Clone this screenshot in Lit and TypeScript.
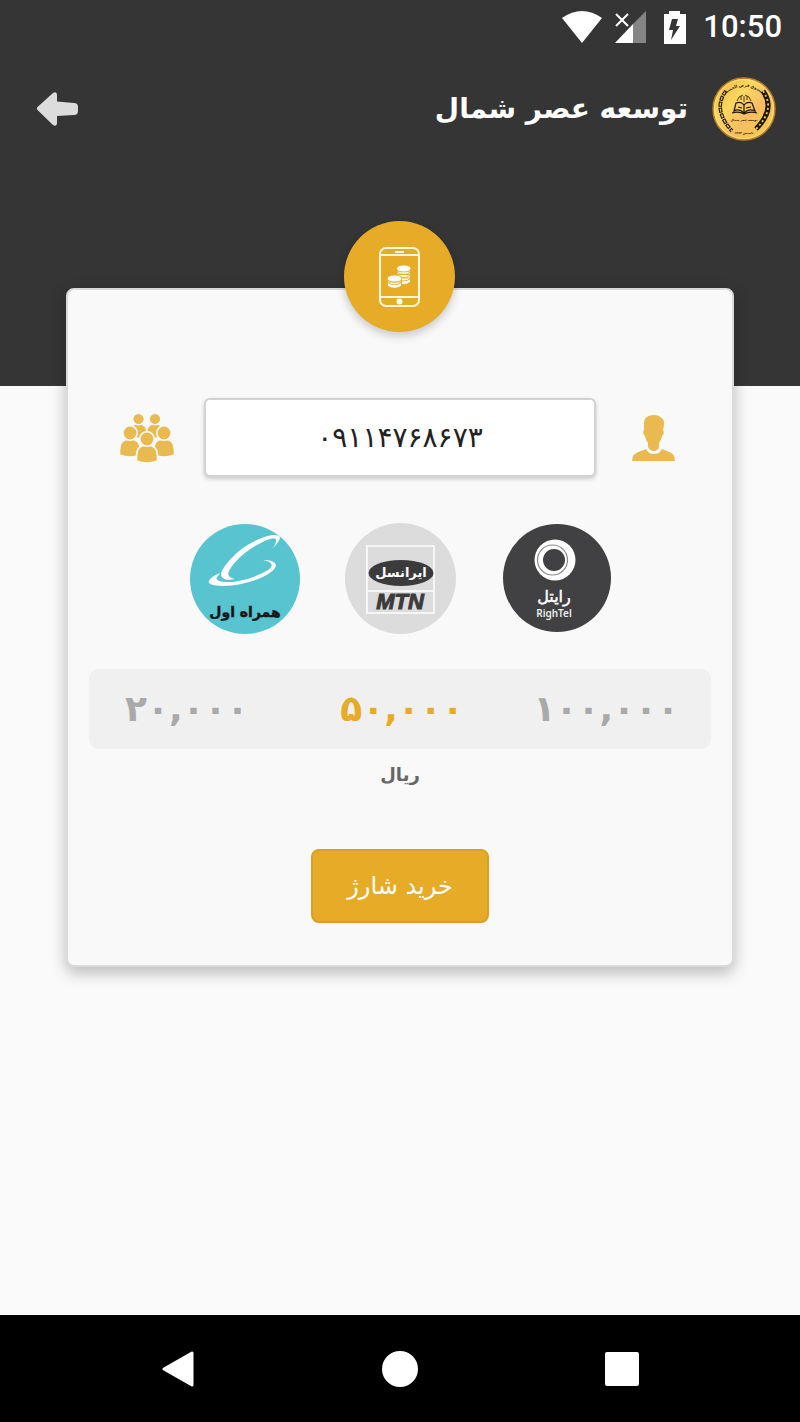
import { LitElement, html, svg, css } from "lit";
import { customElement, state } from "lit/decorators.js";

const operators = [
  {
    id: "rightel",
    name: "رایتل",
    art: svg`
      <circle cx="56" cy="55" r="54" fill="#414042"/>
      <circle cx="54" cy="37" r="20.500" fill="#fff"/>
      <circle cx="51.500" cy="37" r="15" fill="none" stroke="#8a8a8a" stroke-width="1.2"/>
      <circle cx="53" cy="37" r="11" fill="#414042"/>
      <text class="logo-fa" x="53" y="79" font-size="16" text-anchor="middle" fill="#fff" stroke="#fff" stroke-width=".5">رایتل</text>
      <text class="logo-latin" x="53" y="94" font-size="10" font-weight="600" text-anchor="middle" fill="#eee">RighTel</text>`,
  },
  {
    id: "mtn",
    name: "ایرانسل",
    art: svg`
      <circle cx="55.500" cy="55.500" r="55.500" fill="#dcdcdc"/>
      <path d="M22 23H89V90H22ZM22 68H89" fill="none" stroke="#f6f6f6" stroke-width="2"/>
      <ellipse cx="56" cy="50" rx="32.5" ry="13" fill="#3b3b3c"/>
      <text class="logo-fa" x="56" y="54" font-size="13" font-weight="bold" text-anchor="middle" fill="#fff">ایرانسل</text>
      <text class="logo-mtn" x="55" y="86" font-size="22" text-anchor="middle" fill="#3b3b3c" stroke="#3b3b3c">MTN</text>`,
  },
  {
    id: "mci",
    name: "همراه اول",
    art: svg`
      <circle cx="56" cy="56" r="55" fill="#57c4d0"/>
      <path d="M90 13C84 10 72 14 57 23C43 32 32 47 32 51C32 56 38 58 46 56C40 55 38 52 40 48C44 40 56 28 70 21C81 15 88 14 87 18C87 21 85 23 83 26C88 21 93 15 90 13Z" fill="#fff"/>
      <path d="M74 37C87 37 91 42 82 49C71 57 52 63 34 63C24 63 18 61 20 58C21 55 26 52 31 50L29 53C25 57 30 59 38 59C53 59 69 53 79 47C85 43 84 39 74 37Z" fill="#fff"/>
      <text class="logo-fa" x="56" y="94" font-size="14" font-weight="bold" text-anchor="middle" fill="#161616" stroke="#161616" stroke-width=".4">همراه اول</text>`,
  },
];

const amounts = [
  { value: 100000, label: "۱۰۰,۰۰۰" },
  { value: 50000, label: "۵۰,۰۰۰" },
  { value: 20000, label: "۲۰,۰۰۰" },
];

@customElement("app-root")
export class AppRoot extends LitElement {
  @state() private operator = "";
  @state() private amount = 50000;

  static styles = css`
    :host {
      display: flex;
      flex-direction: column;
      min-height: 100vh;
      background: #fafafa;
      font-family: "DejaVu Sans", "Noto Sans", sans-serif;
      color: #222;
    }
    * { box-sizing: border-box; }
    svg { display: block; }
    button {
      padding: 0;
      border: 0;
      background: none;
      font: inherit;
      cursor: pointer;
    }
    .top { background: #353535; color: #fff; padding-bottom: 222px; }
    .status {
      display: flex;
      align-items: center;
      justify-content: flex-end;
      height: 54px;
      padding-right: 18px;
      font: 500 31px/54px Roboto, sans-serif;
    }
    .wifi { margin-right: 12px; }
    .signal { margin-right: 17px; }
    .battery { margin-right: 17px; }
    .bar {
      display: flex;
      align-items: center;
      gap: 24px;
      height: 110px;
      padding: 0 24px 0 36px;
    }
    .title { flex: 1; margin: 0; font-size: 28px; line-height: 48px; font-weight: bold; }
    .card {
      position: relative;
      margin: -98px 66px 0;
      padding: 108px 21px 42px;
      border: 2px solid #dadada;
      border-radius: 8px;
      background: #f9f9f9;
      box-shadow: 0 6px 16px rgba(0, 0, 0, 0.26);
    }
    .badge {
      position: absolute;
      top: -69px;
      left: calc(50% - 56px);
      border-radius: 50%;
      background: #e6ac27;
      box-shadow: 0 4px 10px rgba(0, 0, 0, 0.2);
    }
    .phone-row {
      display: grid;
      grid-template-columns: 115px 1fr 115px;
      align-items: center;
      justify-items: center;
    }
    .phone {
      width: 100%;
      height: 79px;
      border: 2px solid #d2d2d2;
      border-radius: 6px;
      background: #fff;
      box-shadow: 0 2px 4px rgba(0, 0, 0, 0.2);
      color: #222;
      font: 28px/36px "DejaVu Sans", sans-serif;
      text-align: center;
    }
    fieldset { margin: 0; border: 0; padding: 0; min-width: 0; }
    .operators { display: flex; justify-content: center; gap: 45px; margin-top: 46px; }
    .choice { position: relative; display: block; cursor: pointer; }
    .choice input {
      position: absolute;
      inset: 0;
      width: 100%;
      height: 100%;
      margin: 0;
      appearance: none;
      cursor: pointer;
    }
    .amounts {
      display: grid;
      grid-template-columns: 1fr auto 1fr;
      height: 80px;
      margin-top: 35px;
      padding: 0 32px 0 36px;
      border-radius: 10px;
      background: #f0f0f0;
      color: #a9a9a9;
      font-size: 36px;
      line-height: 80px;
      font-weight: bold;
    }
    .amounts .choice:first-child { justify-self: start; }
    .amounts .choice:last-child { justify-self: end; }
    .picked { color: #e6ac27; }
    .unit {
      margin: 8px 0 0;
      color: #666;
      font-size: 18px;
      line-height: 36px;
      font-weight: bold;
      text-align: center;
    }
    .buy {
      display: block;
      min-width: 178px;
      margin: 56px auto 0;
      padding: 0 32px;
      border: 2px solid #d9a023;
      border-radius: 8px;
      background: #e6ac27;
      color: #fff;
      font-size: 24px;
      line-height: 70px;
    }
    .nav {
      display: grid;
      grid-template-columns: repeat(3, 1fr);
      align-items: center;
      justify-items: center;
      height: 107px;
      margin-top: auto;
      padding: 0 67px;
      background: #000;
    }
    .logo-fa { font-family: "DejaVu Sans", sans-serif; }
    .logo-latin { font-family: "Noto Sans", sans-serif; }
    .logo-mtn { font-family: "Liberation Sans", sans-serif; font-weight: bold; font-style: italic; }
  `;

  private person(x: number, y: number, s: number) {
    return svg`<g transform="translate(${x} ${y}) scale(${s})" stroke="#f9f9f9" stroke-width="1.600">
      <path d="M-10.500 22V17C-10.500 9 -6 6 0 6S10.500 9 10.500 17V22Q0 26-10.500 22Z"/>
      <circle r="7.200"/></g>`;
  }

  private statusBar() {
    return html`<div class="status">
      <svg class="wifi" width="40" height="32" viewBox="0 0 40 32"><path d="M0 7Q20-7 40 7L20 32Z" fill="#fff"/></svg>
      <svg class="signal" width="33" height="32" viewBox="0 0 33 32">
        <path d="M32 0V32H19V13Z" fill="#858585"/><path d="M1 32 19 13V32Z" fill="#fff"/>
        <path d="M2 3 14 15M14 3 2 15" stroke="#fff" stroke-width="2"/></svg>
      <svg class="battery" width="22" height="33" viewBox="0 0 22 33">
        <path d="M0 3H5V0H16V3H22V33H0Z" fill="#fff"/><path d="M8 8H14L12 15H16L7 29 9 19H5Z" fill="#353535"/></svg>
      <span>10:50</span>
    </div>`;
  }

  private emblem() {
    return html`<svg width="64" height="64" viewBox="0 0 64 64" role="img" aria-label="نشان">
      <defs>
        <linearGradient id="gold" x1="0" y1="0" x2="1" y2="1">
          <stop offset="0" stop-color="#f0b23e"/><stop offset=".35" stop-color="#fbd860"/>
          <stop offset=".6" stop-color="#f8bd62"/><stop offset="1" stop-color="#f5cd45"/>
        </linearGradient>
        <path id="arc" d="M11 19Q32 0 53 19"/>
      </defs>
      <circle cx="32" cy="32" r="31" fill="url(#gold)" stroke="#b97e21" stroke-width="1.500"/>
      <circle cx="32" cy="32" r="29.500" fill="none" stroke="#fce58d" stroke-width=".8"/>
      <g fill="none" stroke="#1d1705">
        <path d="M14 14Q0 32 20 54" stroke-width="3.600" stroke-dasharray="5 1"/>
        <path d="M14 14Q0 32 20 54" stroke="#f5c451" stroke-width="1.400" stroke-dasharray="3 3" stroke-dashoffset="-1"/>
        <path d="M51 14Q64 32 44 52" stroke-width="5"/>
        <path d="M51 14Q64 32 44 52" stroke="#f5c451" stroke-width="1.800" stroke-dasharray="2 2.500"/>
        <path d="M32 36Q27 31 22 34L24 26Q29 24 32 28Q35 24 40 26L43 34Q37 31 32 36V28M20 36Q27 34 32 37Q38 34 45 36M26 30 30 31M34 31 39 30" stroke-width="1.200"/>
        <path d="M25 24Q26 19 31 18M33 18Q38 19 39 24M29 23V19M35 23V19M32 25V19" stroke-width=".8"/>
      </g>
      <g class="logo-fa" font-weight="bold" text-anchor="middle" fill="#1d1705">
        <text font-size="4"><textPath href="#arc" startOffset="50%">صندوق قرض الحسنه</textPath></text>
        <text x="32" y="44" font-size="3">توسعه عصر شمال</text>
        <text x="32" y="57" font-size="3">تاسیس ۱۳۶۲</text>
      </g>
    </svg>`;
  }

  render() {
    return html`
      <header class="top">
        ${this.statusBar()}
        <div class="bar" dir="rtl">
          ${this.emblem()}
          <h1 class="title">توسعه عصر شمال</h1>
          <button aria-label="بازگشت">
            <svg width="42" height="36" viewBox="0 0 42 36">
              <path d="M1.500 16 17 2Q21 0 21 4V10.500L38 12Q42 12 42 16V20Q42 24 38 24L21 25V32Q21 36 17 34L1.500 19Q0 17.500 1.500 16Z" fill="#dcdcdc"/>
            </svg>
          </button>
        </div>
      </header>

      <main class="card">
        <svg class="badge" width="111" height="111" viewBox="0 0 111 111">
          <g fill="none" stroke="#fff6dd" stroke-width="2">
            <rect x="36" y="27" width="39" height="58" rx="6"/>
            <path d="M36 34H75M36 76H75M51 31H60"/>
          </g>
          <circle cx="55.500" cy="80.500" r="3" fill="#fff"/>
          <g fill="#fff" stroke="#e6ac27" stroke-width=".9">
            <path d="M53 57v4q7 5 13.500 0v-4zM53 53.500v4q7 5 13.500 0v-4zM53 50v4q7 5 13.500 0v-4zM53 47v4q7 5 13.500 0v-4z"/>
            <ellipse cx="59.700" cy="47.500" rx="7.200" ry="3.500"/>
            <path d="M43.500 61v4q7 4.500 14 0v-4zM43.500 57v4.500q7 4.500 14 0v-4.500z"/>
            <ellipse cx="50.500" cy="57.500" rx="7.400" ry="3.500"/>
          </g>
        </svg>

        <div class="phone-row">
          <button aria-label="مخاطبین">
            <svg width="54" height="51" viewBox="0 0 54 51" fill="#e9ba50">
              ${this.person(18.5, 7, 0.8)}${this.person(35, 7, 0.8)}
              ${this.person(10, 21, 1)}${this.person(44, 21, 1)}${this.person(27, 27, 1)}
            </svg>
          </button>
          <input class="phone" type="tel" dir="ltr" aria-label="شماره موبایل" value="۰۹۱۱۴۷۶۸۶۷۳">
          <button aria-label="شماره من">
            <svg width="44" height="46" viewBox="0 0 44 46" fill="#e9ba50">
              <path d="M0 46Q0 38 9 36L14 34Q16 39 22 39T30 34L35 36Q43 38 43 46Z"/>
              <path d="M12 7Q13 0 22 0Q27 0 28 2Q33 4 32 10L31 15Q33 18 30 21Q29 26 27 28V32Q26 36 22 36T16 32V28Q14 26 13 21Q10 18 12 15Z"/>
            </svg>
          </button>
        </div>

        <fieldset class="operators" dir="rtl" aria-label="اپراتور">
          ${operators.map((o) => html`<label class="choice">
            <svg width="111" height="111" viewBox="0 0 111 111">${o.art}</svg>
            <input type="radio" name="operator" aria-label=${o.name}
              .checked=${this.operator === o.id} @change=${() => (this.operator = o.id)}>
          </label>`)}
        </fieldset>

        <fieldset class="amounts" dir="rtl" aria-label="مبلغ">
          ${amounts.map((a) => html`<label class="choice ${this.amount === a.value ? "picked" : ""}">
            ${a.label}
            <input type="radio" name="amount"
              .checked=${this.amount === a.value} @change=${() => (this.amount = a.value)}>
          </label>`)}
        </fieldset>
        <p class="unit" dir="rtl">ریال</p>
        <button class="buy" dir="rtl">خرید شارژ</button>
      </main>

      <nav class="nav">
        <button aria-label="Back"><svg width="32" height="36" viewBox="0 0 32 36"><path d="M2 18 30 2V34Z" fill="#fff" stroke="#fff" stroke-width="3" stroke-linejoin="round"/></svg></button>
        <button aria-label="Home"><svg width="36" height="36" viewBox="0 0 36 36"><circle cx="18" cy="18" r="18" fill="#fff"/></svg></button>
        <button aria-label="Recent apps"><svg width="34" height="34" viewBox="0 0 34 34"><rect width="34" height="34" rx="2" fill="#fff"/></svg></button>
      </nav>
    `;
  }
}
